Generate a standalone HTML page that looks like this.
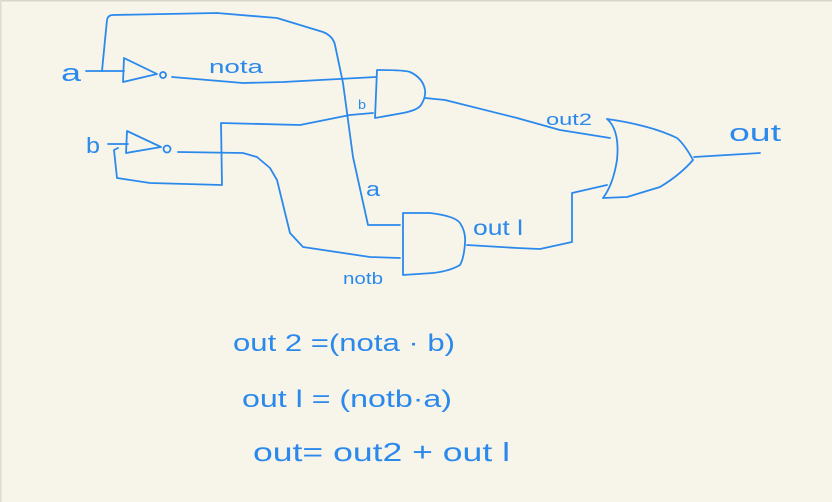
<!DOCTYPE html>
<html><head><meta charset="utf-8"><style>
html,body{margin:0;padding:0;background:#f7f5ea;}
svg{display:block;}
text{font-family:"Liberation Sans",sans-serif;fill:#2b89ec;}
</style></head><body>
<svg width="832" height="502" viewBox="0 0 832 502" xmlns="http://www.w3.org/2000/svg">
<rect x="0" y="0" width="832" height="502" fill="#f7f5ea"/>
<rect x="0" y="0" width="832" height="1.5" fill="#d8d6cc"/>
<rect x="0" y="0" width="1.5" height="502" fill="#dedcd2"/>
<g fill="none" stroke="#2b89ec" stroke-width="1.8" stroke-linecap="round" stroke-linejoin="round">
<!-- a input and loop -->
<path d="M86 71 L124 71"/>
<path d="M102 71 L105 40 L107 20 Q108 15 113 15 L217 13 L277 18 Q300 25 323 32 Q333 36 335 45 L343 83 L353 157 L368 225 L400 225"/>
<!-- not a -->
<path d="M124 58 L123 82 L157 74 L124 58"/>
<circle cx="163" cy="75" r="3"/>
<path d="M172 77 L243 83 L283 82 L376 77"/>
<!-- AND1 -->
<path d="M377 70 L375 118 L403 113 Q418 110 421 105 Q426 97 425 90 Q423 78 410 72 Q405 70 377 70"/>
<!-- b input -->
<path d="M108 144 L128 144"/>
<path d="M373 113 L350 115 L300 125 L221 123 L222 185 L150 183 L117 178 L114 150 L118 148"/>
<!-- not b -->
<path d="M127 131 L126 153 L161 147 L127 131"/>
<circle cx="167" cy="149" r="3.5"/>
<path d="M178 152 L243 153 L257 157 L270 168 L277 180 L290 233 L303 247 L370 257 L400 258"/>
<!-- AND2 -->
<path d="M403 213 L430 213 Q455 216 460 223 Q466 232 465 243 Q464 258 460 265 Q450 271 433 273 L403 275 Z"/>
<!-- out1 wire -->
<path d="M467 245 L517 248 L540 249 L572 242 L572 193 L607 185"/>
<!-- out2 wire -->
<path d="M425 98 L445 100 L517 118 L560 130 L610 138"/>
<!-- OR -->
<path d="M607 119 Q620 130 617 160 Q613 185 603 198 L627 197 L660 187 Q680 175 693 160 Q685 145 677 138 Q650 125 607 119"/>
<path d="M694 157 L760 153"/>
</g>
<!-- labels -->
<text x="61" y="81" font-size="24" textLength="20" lengthAdjust="spacingAndGlyphs">a</text>
<text x="86" y="153" font-size="22" textLength="14" lengthAdjust="spacingAndGlyphs">b</text>
<text x="209" y="73" font-size="18" textLength="54" lengthAdjust="spacingAndGlyphs">nota</text>
<text x="358" y="109" font-size="13" textLength="8" lengthAdjust="spacingAndGlyphs">b</text>
<text x="366" y="196" font-size="20" textLength="14" lengthAdjust="spacingAndGlyphs">a</text>
<text x="343" y="284" font-size="17" textLength="40" lengthAdjust="spacingAndGlyphs">notb</text>
<text x="473" y="235" font-size="21" textLength="50" lengthAdjust="spacingAndGlyphs">out l</text>
<text x="546" y="125" font-size="17" textLength="46" lengthAdjust="spacingAndGlyphs">out2</text>
<text x="729" y="141" font-size="24" textLength="52" lengthAdjust="spacingAndGlyphs">out</text>
<!-- equations -->
<text x="233" y="351" font-size="24" textLength="222" lengthAdjust="spacingAndGlyphs">out 2 =(nota · b)</text>
<text x="242" y="407" font-size="24" textLength="210" lengthAdjust="spacingAndGlyphs">out l = (notb·a)</text>
<text x="253" y="461" font-size="26" textLength="257" lengthAdjust="spacingAndGlyphs">out=  out2 + out l</text>
</svg>
</body></html>
